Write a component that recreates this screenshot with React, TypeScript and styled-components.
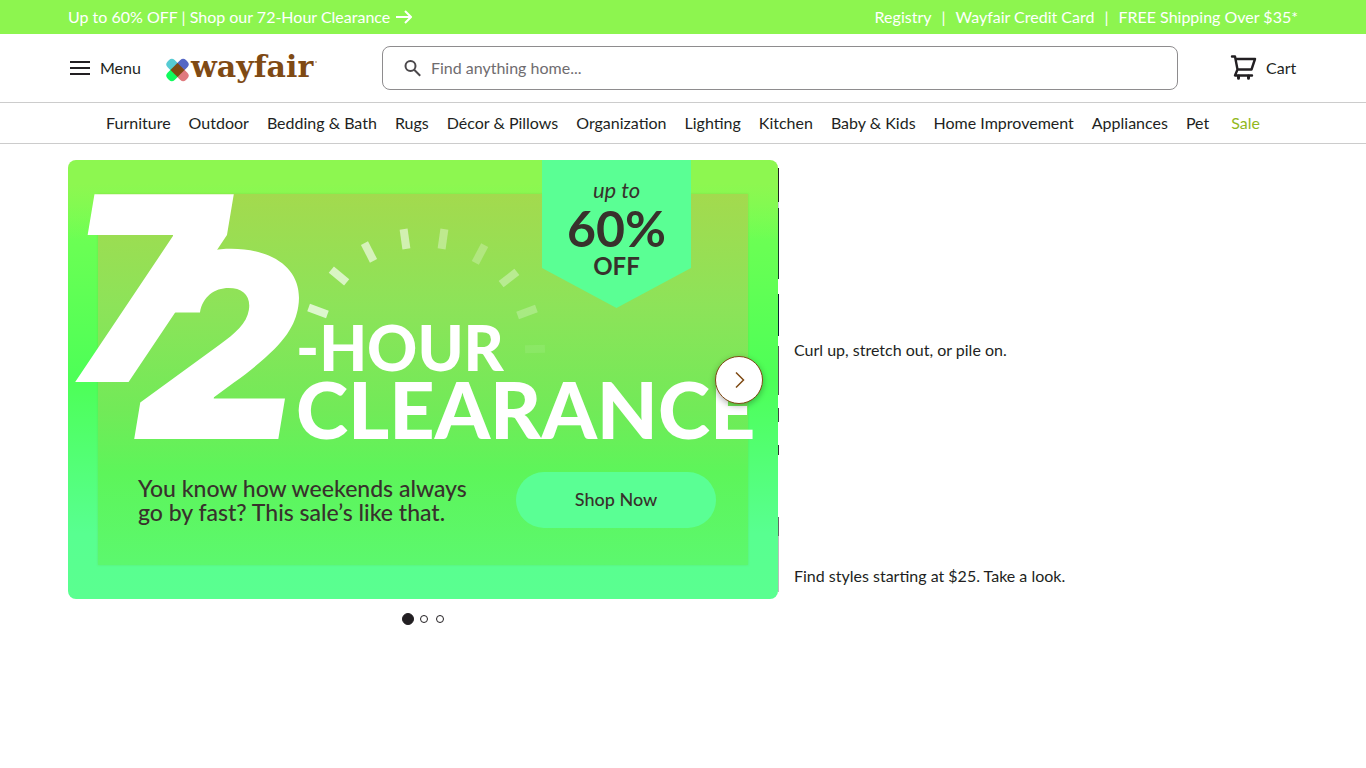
import React from 'react';
import styled, { createGlobalStyle } from 'styled-components';

const Global = createGlobalStyle`
  * { box-sizing: border-box; }
  body { margin: 0; background: #fff; color: #221f22; font: 16px/24px Lato, "Liberation Sans", sans-serif; }
  a { color: inherit; text-decoration: none; }
  p { margin: 0; }
  button, input { font: inherit; color: inherit; }
`;

const Promo = styled.div`
  display: flex;
  align-items: center;
  justify-content: space-between;
  height: 34px;
  padding: 0 68px;
  background: #8df54f;
  color: #fff;
  font-size: 16px;
`;
const PromoLink = styled.a`
  display: flex;
  align-items: center;
  gap: 6px;
`;
const PromoLinks = styled.nav`
  display: flex;
  gap: 10px;
`;

const Bar = styled.header`
  display: flex;
  align-items: center;
  height: 68px;
  padding: 0 68px;
`;
const MenuButton = styled.button`
  display: flex;
  align-items: center;
  gap: 8px;
  padding: 0;
  border: 0;
  background: none;
  cursor: pointer;
`;
const Logo = styled.a`
  display: flex;
  margin-left: 24px;
`;
const LogoArt = styled.svg`
  display: block;
  overflow: visible;
`;
const Search = styled.label`
  display: flex;
  flex: 1;
  align-items: center;
  gap: 8px;
  height: 44px;
  margin: 0 52px 0 64px;
  padding: 0 20px;
  border: 1px solid #8e8c8e;
  border-radius: 8px;
`;
const SearchInput = styled.input`
  flex: 1;
  min-width: 0;
  padding: 0;
  border: 0;
  outline: 0;
  background: none;
  &::placeholder { color: #6f6c6f; opacity: 1; }
`;
const CartLink = styled.a`
  display: flex;
  align-items: center;
  gap: 8px;
  min-width: 68px;
`;

const Nav = styled.nav`
  display: flex;
  align-items: center;
  justify-content: center;
  gap: 18px;
  height: 42px;
  border: solid #ccc;
  border-width: 1px 0;
  white-space: nowrap;
`;
const NavLink = styled.a<{ $sale?: boolean }>`
  color: ${(p) => (p.$sale ? '#92b81c' : 'inherit')};
  margin-left: ${(p) => (p.$sale ? '4px' : '0')};
`;

const Main = styled.main`
  display: grid;
  grid-template-columns: minmax(0, 710fr) minmax(0, 504fr);
  column-gap: 16px;
  padding: 16px 68px;
`;
const Carousel = styled.section`
  position: relative;
`;
/* sliver of the following slide, visible beside the current one */
const Peek = styled.div`
  position: absolute;
  top: 8px;
  right: -1px;
  width: 1px;
  height: 424px;
  background: linear-gradient(
    to bottom,
    #222 0 34px, #ccd 34px 40px, #1d3a2c 40px 111px, #fff 111px 126px, #123 126px 168px,
    #fff 168px 178px, #555 178px 227px, #fff 227px 240px, #444 240px 254px, #fff 254px 277px,
    #333 277px 287px, #fff 287px 349px, #666 349px 368px, #bbb 368px 424px
  );
`;
const Slide = styled.div`
  position: relative;
  height: 439px;
  padding: 34px 30px 0;
  border-radius: 8px;
  overflow: hidden;
  background:
    linear-gradient(to bottom, #8df750 0, #8df750 24px, transparent 80px),
    linear-gradient(to bottom, #7cff52 0, #4dff57 50%, #58ff90 85%, #5aff90 100%);
`;
const Panel = styled.div`
  height: 371px;
  background: linear-gradient(to bottom, #a3da4e 0, #8de359 30%, #72ea58 58%, #5df55a 75%, #5cf86e 100%);
  box-shadow: 0 0 2px rgba(110, 170, 50, 0.3);
`;
const Title = styled.h1`
  display: flex;
  align-items: flex-end;
  height: 245px;
  margin: 0 -30px 0 -24px;
  color: #fff;
  font-weight: 900;
  white-space: nowrap;
`;
const Digits = styled.span`
  display: flex;
  width: 222px;
  height: 245px;
  font-family: Inter, sans-serif;
  font-size: 258px;
  line-height: 188px;
  font-style: italic;
`;
const Digit = styled.span<{ $low?: boolean }>`
  align-self: ${(p) => (p.$low ? 'flex-end' : 'flex-start')};
  margin-left: ${(p) => (p.$low ? '-88px' : '-6px')};
`;
const Words = styled.span`
  display: flex;
  flex-direction: column;
`;
const Hour = styled.span`
  font-size: 62px;
  line-height: 64px;
`;
const Clearance = styled.span`
  font-size: 79px;
  line-height: 60px;
`;
const Offer = styled.div`
  display: flex;
  align-items: center;
  justify-content: space-between;
  margin-top: 33px;
  padding: 0 32px 0 40px;
`;
const Pitch = styled.p`
  color: #38312c;
  font-size: 23px;
  font-weight: 500;
  line-height: 24px;
  white-space: nowrap;
`;
const ShopButton = styled.button`
  width: 200px;
  height: 56px;
  padding: 0 0 2px;
  border: 0;
  border-radius: 28px;
  background: #5aff94;
  color: #38312c;
  font-size: 18px;
  font-weight: 500;
  cursor: pointer;
`;
const Rays = styled.svg`
  position: absolute;
  top: 60px;
  left: 232px;
`;
const Ribbon = styled.div`
  position: absolute;
  top: 0;
  right: 87px;
  display: flex;
  flex-direction: column;
  align-items: center;
  width: 149px;
  height: 148px;
  padding-top: 18px;
  background: #5aff94;
  clip-path: polygon(0 0, 100% 0, 100% 73%, 50% 100%, 0 73%);
  color: #38312c;
`;
const UpTo = styled.span`
  font-size: 22px;
  font-style: italic;
  line-height: 24px;
`;
const Percent = styled.strong`
  font-size: 50px;
  font-weight: 700;
  line-height: 52px;
`;
const Off = styled.strong`
  font-size: 24px;
  font-weight: 700;
  line-height: 24px;
`;
const Next = styled.button`
  position: absolute;
  top: 196px;
  right: 15px;
  display: flex;
  align-items: center;
  justify-content: center;
  width: 48px;
  height: 48px;
  padding: 0;
  border: 1px solid #7f4a14;
  border-radius: 50%;
  background: #fff;
  box-shadow: 0 2px 6px rgba(0, 0, 0, 0.3);
  cursor: pointer;
`;
const Dots = styled.div`
  display: flex;
  align-items: center;
  justify-content: center;
  gap: 8px;
  height: 40px;
`;
const Dot = styled.button<{ $on?: boolean }>`
  width: ${(p) => (p.$on ? '12px' : '8px')};
  height: ${(p) => (p.$on ? '12px' : '8px')};
  margin-right: ${(p) => (p.$on ? '-2px' : '0')};
  padding: 0;
  border: 1px solid #221f22;
  border-radius: 50%;
  background: ${(p) => (p.$on ? '#221f22' : '#fff')};
`;
const Side = styled.aside`
  display: grid;
  grid-template-rows: 1fr 1fr;
  row-gap: 14px;
  height: 439px;
`;
const Card = styled.a`
  display: flex;
  align-items: flex-end;
  padding-bottom: 11px;
`;

const links = ['Furniture', 'Outdoor', 'Bedding & Bath', 'Rugs', 'Décor & Pillows', 'Organization', 'Lighting', 'Kitchen', 'Baby & Kids', 'Home Improvement', 'Appliances', 'Pet'];

/* centre x, centre y, angle, opacity of each ray of the burst */
const rays = [
  [18, 91, 20, 0.7],
  [39, 56, 40, 0.65],
  [69, 32, 63, 0.6],
  [105, 19, 82, 0.55],
  [143, 19, 98, 0.35],
  [180, 34, 118, 0.25],
  [209, 58, 142, 0.35],
  [227, 92, 160, 0.25],
  [235, 129, 178, 0.08],
];

export default function App() {
  return (
    <>
      <Global />
      <Promo>
        <PromoLink href="#clearance">
          Up to 60% OFF | Shop our 72-Hour Clearance
          <svg width="16" height="16" viewBox="0 0 16 16" fill="none" stroke="#fff" strokeWidth="2"><path d="M0 8h15M9 2l6 6-6 6" /></svg>
        </PromoLink>
        <PromoLinks>
          <a href="#registry">Registry</a><span>|</span>
          <a href="#card">Wayfair Credit Card</a><span>|</span>
          <a href="#shipping">FREE Shipping Over $35*</a>
        </PromoLinks>
      </Promo>
      <Bar>
        <MenuButton>
          <svg width="24" height="24" viewBox="0 0 24 24" stroke="#221f22" strokeWidth="2"><path d="M2 6h20M2 12h20M2 18h20" /></svg>
          Menu
        </MenuButton>
        <Logo href="#home" aria-label="wayfair">
          <LogoArt width="153" height="34" viewBox="0 0 153 34">
            <g transform="translate(12.5 19)">
              <rect x="-13" y="-5" width="14" height="10" rx="4" transform="rotate(45)" fill="#56cbd3" />
              <rect x="-13" y="-5" width="14" height="10" rx="4" transform="rotate(135)" fill="#5567c5" />
              <rect x="-13" y="-5" width="14" height="10" rx="4" transform="rotate(225)" fill="#e07a7e" />
              <rect x="-13" y="-5" width="14" height="10" rx="4" transform="rotate(315)" fill="#10fb5c" />
              <rect x="-5" y="-5" width="10" height="10" transform="rotate(45)" fill="#7f4a14" />
            </g>
            <text x="26" y="26" fontFamily="'DejaVu Serif', serif" fontWeight="700" fontSize="30" fill="#7f4a14">wayfair</text>
            <circle cx="151" cy="11" r="1" fill="#c9a98a" />
          </LogoArt>
        </Logo>
        <Search>
          <svg width="20" height="20" viewBox="0 0 20 20" fill="none" stroke="#4b484b" strokeWidth="2"><circle cx="7.5" cy="8" r="5" /><path d="M11.2 11.7l6 6" /></svg>
          <SearchInput aria-label="Search" placeholder="Find anything home..." />
        </Search>
        <CartLink href="#cart">
          <svg width="28" height="28" viewBox="0 0 28 28" fill="none" stroke="#221f22" strokeWidth="2.4" strokeLinejoin="round" strokeLinecap="round"><path d="M2 2.500h3l2.500 13h14L25 5H5.500M7.500 15.500l-2.500 6h17" /><path d="M8.500 22v2.200M18.500 22v2.200" strokeWidth="3" /></svg>
          Cart
        </CartLink>
      </Bar>
      <Nav>
        {links.map((l) => <NavLink key={l} href="#shop">{l}</NavLink>)}
        <NavLink href="#sale" $sale>Sale</NavLink>
      </Nav>
      <Main>
        <Carousel aria-label="Promotions">
          <Slide>
            <Panel>
              <Title>
                <Digits><Digit>7</Digit><Digit $low>2</Digit></Digits>
                <Words><Hour>-HOUR</Hour><Clearance>CLEARANCE</Clearance></Words>
              </Title>
              <Offer>
                <Pitch>You know how weekends always<br />go by fast? This sale’s like that.</Pitch>
                <ShopButton>Shop Now</ShopButton>
              </Offer>
            </Panel>
            <Rays width="250" height="140" viewBox="0 0 250 140" fill="#fff" aria-hidden="true">
              {rays.map(([x, y, angle, opacity]) => (
                <rect key={x} x="-10" y="-4" width="20" height="8" opacity={opacity} transform={`translate(${x} ${y}) rotate(${angle})`} />
              ))}
            </Rays>
            <Ribbon><UpTo>up to</UpTo><Percent>60%</Percent><Off>OFF</Off></Ribbon>
          </Slide>
          <Peek />
          <Next aria-label="Next slide">
            <svg width="24" height="24" viewBox="0 0 24 24" fill="none" stroke="#7f4a14" strokeWidth="1.500"><path d="M9 4.500l7.500 7.500L9 19.500" /></svg>
          </Next>
          <Dots>
            <Dot $on aria-label="Slide 1" /><Dot aria-label="Slide 2" /><Dot aria-label="Slide 3" />
          </Dots>
        </Carousel>
        <Side>
          <Card href="#bedding">Curl up, stretch out, or pile on.</Card>
          <Card href="#styles">Find styles starting at $25. Take a look.</Card>
        </Side>
      </Main>
    </>
  );
}
